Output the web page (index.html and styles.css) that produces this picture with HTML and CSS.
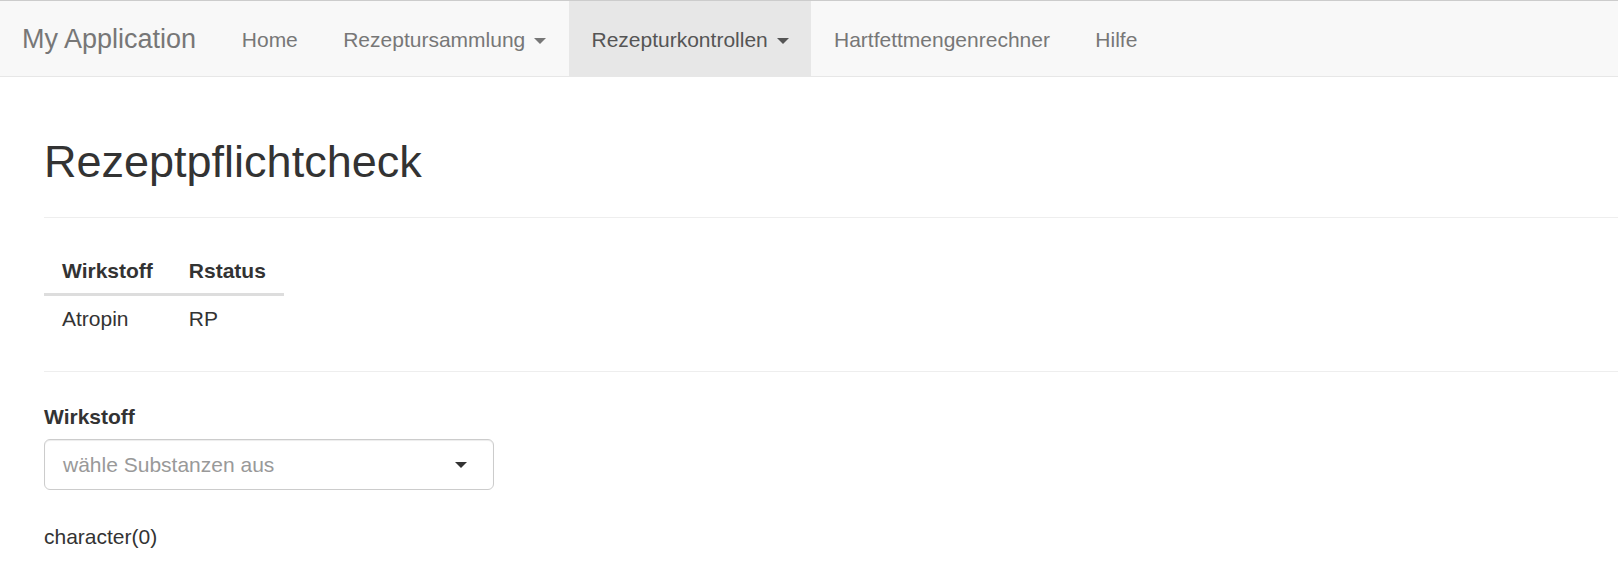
FILE: index.html
```html
<!DOCTYPE html>
<html lang="de">
<head>
<meta charset="utf-8">
<title>My Application</title>
<link rel="stylesheet" href="styles.css">
</head>
<body>
<nav class="navbar">
  <div class="brand">My Application</div>
  <ul class="nav">
    <li><a href="#">Home</a></li>
    <li><a href="#">Rezeptursammlung <span class="caret"></span></a></li>
    <li class="active"><a href="#">Rezepturkontrollen <span class="caret"></span></a></li>
    <li><a href="#">Hartfettmengenrechner</a></li>
    <li><a href="#">Hilfe</a></li>
  </ul>
</nav>
<main class="content">
  <h2 class="title">Rezeptpflichtcheck</h2>
  <hr class="rule">
  <table class="data-table">
    <thead>
      <tr><th>Wirkstoff</th><th>Rstatus</th></tr>
    </thead>
    <tbody>
      <tr><td>Atropin</td><td>RP</td></tr>
    </tbody>
  </table>
  <hr class="rule">
  <div class="form-group">
    <label class="control-label">Wirkstoff</label>
    <div class="select-input">
      <span class="placeholder">wähle Substanzen aus</span>
      <span class="select-caret"></span>
    </div>
  </div>
  <div class="text-output">character(0)</div>
</main>
</body>
</html>
```

FILE: styles.css
```css
* {
  box-sizing: border-box;
}

html, body {
  margin: 0;
  padding: 0;
  background: #fff;
}

body {
  font-family: "Liberation Sans", Arial, Helvetica, sans-serif;
  font-size: 21px;
  line-height: 30px;
  color: #333;
}

/* Navbar */
.navbar {
  display: flex;
  align-items: stretch;
  height: 77px;
  background: #f8f8f8;
  border-top: 1px solid #cccccc;
  border-bottom: 1px solid #e7e7e7;
  padding: 0;
}

.brand {
  padding: 23px 23px 22px 22px;
  font-size: 27px;
  line-height: 30px;
  height: 75px;
  color: #777;
}

.nav {
  display: flex;
  list-style: none;
  margin: 0;
  padding: 0;
}

.nav li a {
  display: block;
  padding: 23.5px 22.7px 21.5px;
  line-height: 30px;
  height: 75px;
  color: #777;
  text-decoration: none;
}

.nav li.active a {
  background: #e7e7e7;
  color: #555;
}

.caret {
  display: inline-block;
  width: 0;
  height: 0;
  margin-left: 3px;
  vertical-align: middle;
  border-top: 6px solid currentColor;
  border-left: 6px solid transparent;
  border-right: 6px solid transparent;
}

/* Content */
.content {
  padding: 60px 0 0 44px;
  display: flow-root;
}

.title {
  margin: 0;
  padding-top: 1px;
  font-size: 45px;
  line-height: 48.5px;
  font-weight: 500;
  color: #333;
}

.rule {
  margin: 30px 0;
  border: 0;
  border-top: 1px solid #eee;
  height: 0;
}

.data-table {
  border-collapse: collapse;
  border-spacing: 0;
}

.data-table th,
.data-table td {
  padding: 8.5px 18px 6.5px;
  line-height: 30px;
  text-align: left;
}

.data-table th {
  font-weight: bold;
  border-bottom: 3px solid #ddd;
}

.form-group {
  width: 450px;
  margin-bottom: 31px;
}

.control-label {
  display: block;
  font-weight: bold;
  line-height: 30px;
  margin-bottom: 7.5px;
}

.select-input {
  display: flex;
  align-items: center;
  justify-content: space-between;
  height: 50.5px;
  padding: 2px 26px 0 18px;
  border: 1px solid #ccc;
  border-radius: 6px;
  background: #fff;
  box-shadow: inset 0 1px 1px rgba(0, 0, 0, 0.075);
}

.placeholder {
  color: #999;
  line-height: 30px;
}

.select-caret {
  width: 0;
  height: 0;
  border-top: 6.5px solid #333;
  border-left: 6.5px solid transparent;
  border-right: 6.5px solid transparent;
  margin-top: -1px;
}

.text-output {
  padding-top: 1px;
  line-height: 30px;
}
```
